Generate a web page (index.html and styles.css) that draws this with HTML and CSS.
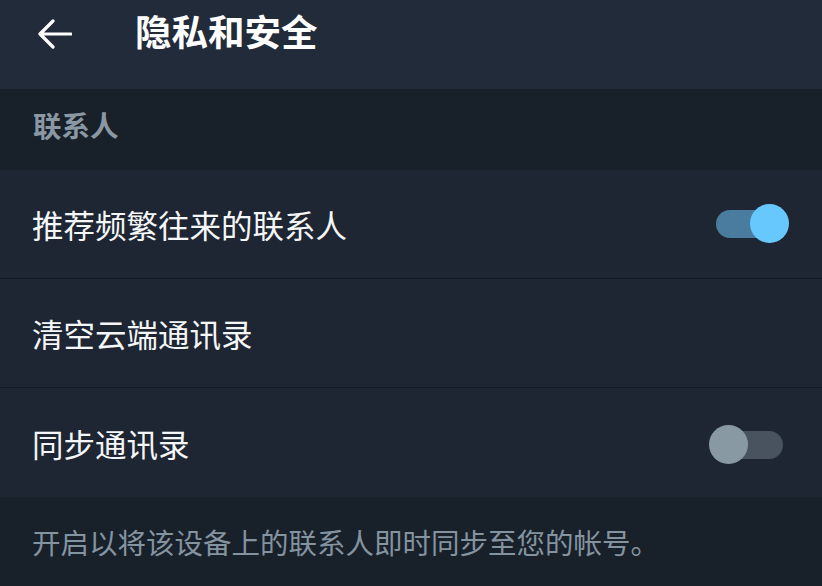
FILE: index.html
```html
<!DOCTYPE html>
<html lang="zh-CN">
<head>
<meta charset="utf-8">
<title>隐私和安全</title>
<link rel="stylesheet" href="styles.css">
</head>
<body>
<div class="screen">
  <header class="topbar">
    <span class="back">
      <svg width="34" height="30" viewBox="0 0 34 30"><path d="M2 15 H33 M15 2 L2 15 L15 28" fill="none" stroke="#ffffff" stroke-width="3.2" stroke-linecap="round" stroke-linejoin="round"/></svg>
    </span>
    <h1 class="title">隐私和安全</h1>
  </header>
  <div class="section-head">联系人</div>
  <div class="row bordered">
    <span class="label">推荐频繁往来的联系人</span>
    <span class="switch on"><span class="track"></span><span class="thumb"></span></span>
  </div>
  <div class="row bordered">
    <span class="label">清空云端通讯录</span>
  </div>
  <div class="row">
    <span class="label">同步通讯录</span>
    <span class="switch off"><span class="track"></span><span class="thumb"></span></span>
  </div>
  <div class="footer">开启以将该设备上的联系人即时同步至您的帐号。</div>
</div>
</body>
</html>
```

FILE: styles.css
```css
* { box-sizing: border-box; margin: 0; padding: 0; }
html, body { width: 822px; height: 586px; overflow: hidden; background: #18202a; }
body { font-family: "Noto Sans CJK SC", "Noto Sans", sans-serif; }
.screen { display: flex; flex-direction: column; width: 822px; height: 586px; }
.topbar { height: 89px; background: #222b3a; display: flex; align-items: center; padding-left: 38px; }
.back { display: flex; width: 34px; height: 30px; margin-top: -22px; }
.title { font-size: 36.5px; font-weight: 700; color: #ffffff; margin-left: 63px; margin-top: -26px; line-height: 1; letter-spacing: 0; }
.section-head { height: 81px; background: #18202a; color: #8a98a3; font-size: 28.5px; font-weight: 700; display: flex; align-items: center; padding-left: 33px; padding-bottom: 10px; }
.row { height: 109px; background: #1e2633; display: flex; align-items: center; justify-content: space-between; padding-left: 32px; padding-right: 33px; }
.row.bordered { border-bottom: 1px solid #151b24; }
.label { color: #f4f6f8; font-size: 31.5px; line-height: 1; margin-top: 2px; }
.switch { position: relative; width: 74px; height: 40px; display: block; }
.switch .track { position: absolute; top: 6px; height: 28px; border-radius: 14px; }
.switch .thumb { position: absolute; top: 0; width: 39px; height: 39px; border-radius: 50%; }
.switch.on { margin-top: 0; }
.switch.on .track { left: 1px; width: 60px; background: #4a7c9f; }
.switch.on .thumb { right: 0; background: #66c8fd; }
.switch.off { margin-top: 4px; margin-right: 6px; }
.switch.off .track { left: 10px; width: 64px; background: #48535f; }
.switch.off .thumb { left: 0; background: #8999a4; }
.footer { flex: 1; background: #18202a; color: #8493a0; font-size: 28.5px; padding-left: 32px; display: flex; align-items: center; }
```
